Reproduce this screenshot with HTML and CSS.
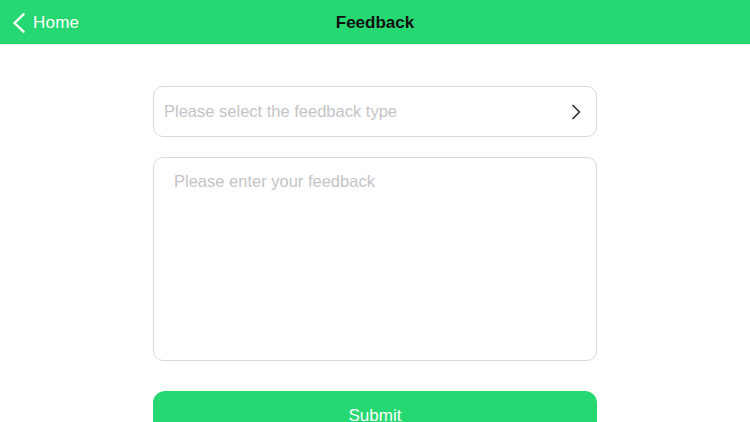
FILE: index.html
```html
<!DOCTYPE html>
<html>
<head>
<meta charset="utf-8">
<link rel="stylesheet" href="styles.css">
</head>
<body>
<header class="navbar">
  <a class="back">
    <svg class="back-icon" width="12" height="20" viewBox="0 0 12 20"><path d="M10.5 1.3 L1.5 10 L10.5 18.7" fill="none" stroke="#fff" stroke-width="2.4" stroke-linecap="round" stroke-linejoin="round"/></svg>
    <span class="back-label">Home</span>
  </a>
  <h1 class="title">Feedback</h1>
</header>
<main class="content">
  <div class="select">
    <span class="placeholder">Please select the feedback type</span>
    <svg class="chev" width="10" height="16" viewBox="0 0 10 16"><path d="M2 1.5 L8.5 8 L2 14.5" fill="none" stroke="#333" stroke-width="1.7" stroke-linecap="round" stroke-linejoin="round"/></svg>
  </div>
  <div class="textarea">
    <span class="placeholder">Please enter your feedback</span>
  </div>
  <button class="submit">Submit</button>
</main>
</body>
</html>
```
FILE: styles.css
```css
html, body {
  margin: 0;
  padding: 0;
  background: #fff;
  font-family: "Liberation Sans", Arial, sans-serif;
  overflow: hidden;
  height: 422px;
}
.navbar {
  box-sizing: border-box;
  height: 45px;
  padding-top: 2px;
  background: #26d871;
  display: flex;
  align-items: center;
  justify-content: center;
  position: relative;
  border-bottom: 1px solid #e8e8e8;
}
.back {
  position: absolute;
  left: 13px;
  top: 0;
  height: 45px;
  padding-top: 1px;
  box-sizing: border-box;
  display: flex;
  align-items: center;
  gap: 8px;
  color: #fff;
  font-size: 17px;
}
.back-icon { display: block; }
.back-label { letter-spacing: 0.2px; }
.title {
  margin: 0;
  font-size: 17px;
  font-weight: bold;
  color: #111;
}
.content {
  width: 444px;
  margin: 0 auto;
  padding-top: 41px;
  display: flex;
  flex-direction: column;
}
.select {
  box-sizing: border-box;
  height: 51px;
  border: 1px solid #d9d9d9;
  border-radius: 10px;
  display: flex;
  align-items: center;
  justify-content: space-between;
  padding: 0 15px 0 10px;
}
.placeholder {
  color: #c4c4c6;
  font-size: 16.5px;
}
.textarea {
  box-sizing: border-box;
  margin-top: 20px;
  height: 204px;
  border: 1px solid #d9d9d9;
  border-radius: 10px;
  padding: 14px 20px;
}
.submit {
  margin-top: 30px;
  height: 50px;
  border: none;
  border-radius: 12px;
  background: #26d871;
  color: #fff;
  font-family: inherit;
  font-size: 17px;
  padding: 0;
}
.chev { display: block; }
```
